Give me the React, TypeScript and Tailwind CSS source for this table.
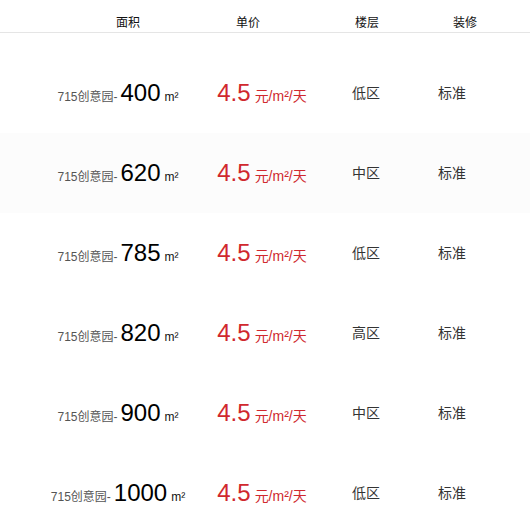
const ROWS = [
  { area: "400", floor: "低区" },
  { area: "620", floor: "中区" },
  { area: "785", floor: "低区" },
  { area: "820", floor: "高区" },
  { area: "900", floor: "中区" },
  { area: "1000", floor: "低区" },
];

const FONT = "font-['Liberation_Sans','Noto_Sans_CJK_SC',sans-serif]";

export default function App() {
  return (
    <div className={`min-h-screen w-[530px] bg-white ${FONT}`}>
      {/* header */}
      <div className="flex h-[33px] items-start border-b border-[#e5e5e5] pt-[15px] text-[12px] leading-[16px] text-[#111]">
        <div className="ml-[68px] w-[120px] text-center">面积</div>
        <div className="w-[120px] text-center">单价</div>
        <div className="w-[118px] text-center">楼层</div>
        <div className="w-[78px] text-center">装修</div>
      </div>

      <div className="mt-[20px]">
        {ROWS.map((row, i) => (
          <div
            key={row.area}
            className={`flex h-[80px] items-center ${i === 1 ? "bg-[#fcfcfc]" : ""}`}
          >
            <div className="ml-[24px] flex w-[188px] items-baseline justify-center whitespace-nowrap">
              <span className="text-[12px] text-[#555]">715创意园-</span>
              <span className="ml-[3px] text-[24px] leading-[28px] text-black">{row.area}</span>
              <span className="ml-[4px] text-[12px] text-[#111]">m²</span>
            </div>
            <div className="flex w-[100px] items-baseline justify-center whitespace-nowrap text-[#d0282e]">
              <span className="text-[24px] leading-[28px]">4.5</span>
              <span className="ml-[4px] text-[14px]">元/m²/天</span>
            </div>
            <div className="w-[108px] text-center text-[14px] text-[#333]">{row.floor}</div>
            <div className="w-[64px] text-center text-[14px] text-[#333]">标准</div>
          </div>
        ))}
      </div>
    </div>
  );
}
